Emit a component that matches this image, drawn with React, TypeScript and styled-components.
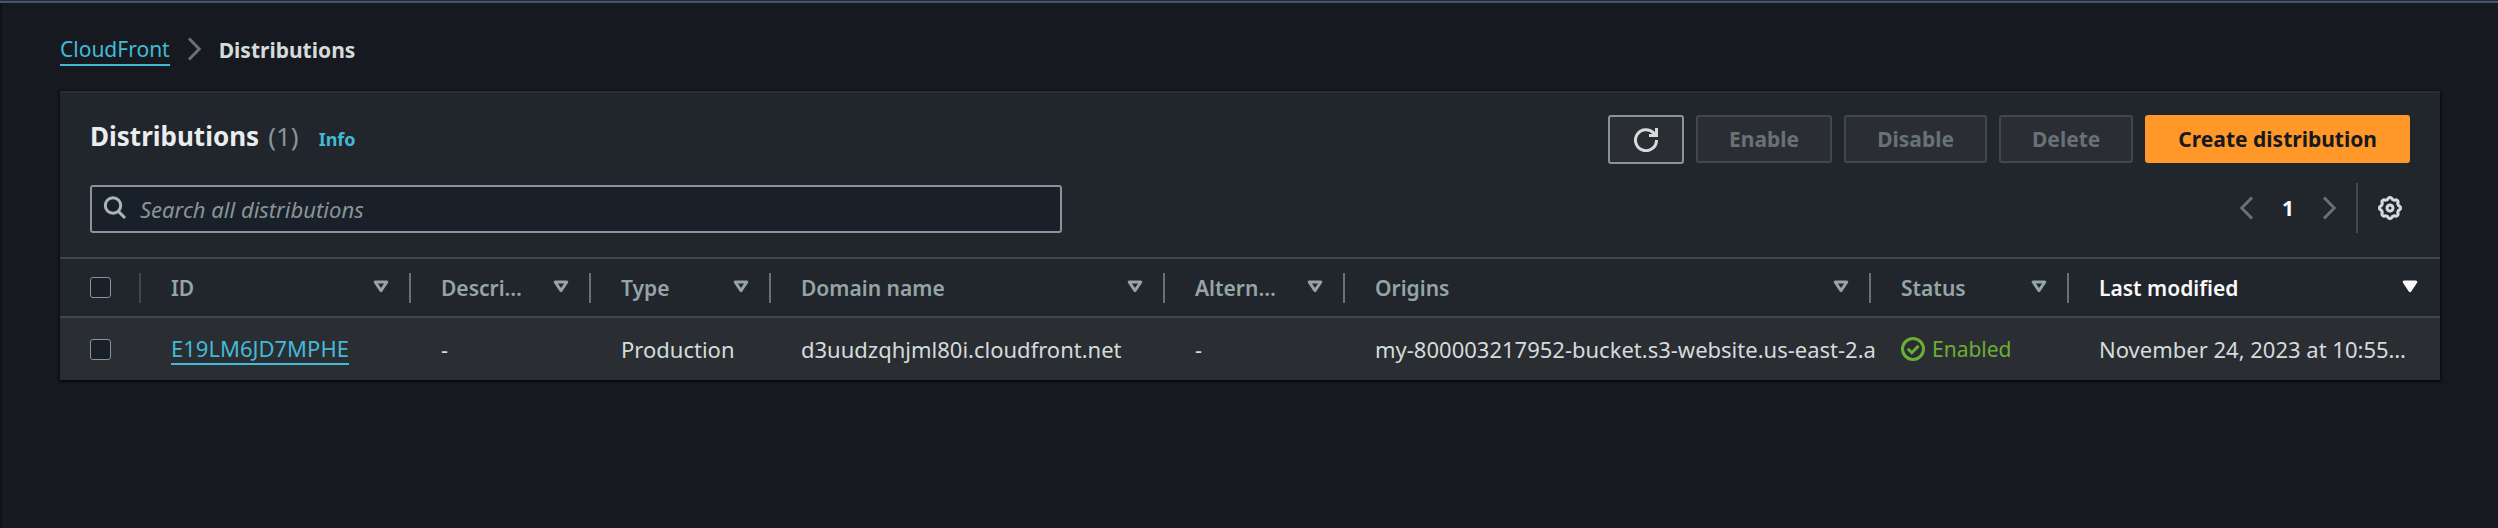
import React from "react";
import styled, { createGlobalStyle } from "styled-components";

const c = {
  page: "#16191f",
  edge: "#101216",
  panel: "#21252c",
  raised: "#2a2e33",
  line: "#414750",
  divider: "#687078",
  input: "#1a2029",
  muted: "#879596",
  label: "#95a5a6",
  text: "#d5dbdb",
  bright: "#eaeded",
  link: "#44b9d6",
  success: "#6aaf35",
  accent: "#ff9828",
};

const GlobalStyle = createGlobalStyle`
  *, *::before, *::after { box-sizing: border-box; }
  html { background: ${c.page}; }
  body {
    margin: 0;
    color: ${c.text};
    font-family: "Noto Sans", "Open Sans", sans-serif;
    font-size: 21px;
    line-height: 30px;
  }
  svg { display: block; flex: none; }
`;

const Page = styled.div`
  min-height: 100vh;
  padding: 0 58px 36px;
  background: ${c.page};
  border-left: 2px solid ${c.edge};
`;

const TopEdge = styled.div`
  height: 3px;
  margin: 0 -58px 0 -60px;
  background: #4a5363;
  border-top: 1px solid #232f3e;
`;

const Breadcrumbs = styled.nav`
  margin-top: 32px;
  ol {
    display: flex;
    align-items: flex-start;
    gap: 17px;
    margin: 0;
    padding: 0;
    list-style: none;
  }
  li {
    display: flex;
    gap: 17px;
  }
  svg { margin-top: 2px; color: ${c.divider}; }
`;

const TextLink = styled.a`
  display: inline-block;
  color: ${c.link};
  text-decoration: none;
  border-bottom: 2px solid ${c.link};
`;

const CrumbLink = styled(TextLink)`
  line-height: 29px;
`;

const CurrentCrumb = styled.span`
  font-weight: 700;
`;

const Panel = styled.section`
  margin-top: 25px;
  background: ${c.panel};
  border-top: 2px solid ${c.raised};
  box-shadow: 0 1px 2px 1px #090b0e;
`;

const PanelHeader = styled.div`
  display: flex;
  justify-content: space-between;
  align-items: flex-start;
  padding: 22px 30px 0;
`;

const Heading = styled.div`
  display: flex;
  align-items: baseline;
  gap: 20px;
  padding-top: 2px;
`;

const Title = styled.h1`
  display: flex;
  gap: 9px;
  margin: 0;
  font-size: 26px;
  line-height: 38px;
  font-weight: 700;
  color: ${c.bright};
  span { font-weight: 400; color: ${c.muted}; }
`;

const InfoLink = styled.a`
  font-size: 18px;
  font-weight: 700;
  color: ${c.link};
  text-decoration: none;
`;

const Actions = styled.div`
  display: flex;
  gap: 12px;
`;

type Variant = "normal" | "disabled" | "primary";
const variants: Record<Variant, { bg: string; border: string; fg: string }> = {
  normal: { bg: c.raised, border: c.muted, fg: c.text },
  disabled: { bg: c.raised, border: c.line, fg: c.divider },
  primary: { bg: c.accent, border: c.accent, fg: c.page },
};

const Button = styled.button<{ $variant: Variant }>`
  display: flex;
  align-items: center;
  justify-content: center;
  height: 48px;
  padding: 0 31px;
  border: 2px solid ${(p) => variants[p.$variant].border};
  border-radius: 3px;
  background: ${(p) => variants[p.$variant].bg};
  color: ${(p) => variants[p.$variant].fg};
  font: inherit;
  font-weight: 700;
`;

const RefreshButton = styled(Button)`
  width: 76px;
  height: 49px;
  padding: 0;
`;

const Tools = styled.div`
  display: flex;
  justify-content: space-between;
  align-items: flex-start;
  padding: 21px 30px 24px;
`;

const SearchBox = styled.label`
  display: flex;
  align-items: center;
  gap: 13px;
  width: 42%;
  max-width: 972px;
  height: 48px;
  padding: 0 11px;
  background: ${c.input};
  border: 2px solid ${c.muted};
  border-radius: 3px;
  svg { color: #aab7b8; margin-bottom: 2px; }
  input {
    flex: 1;
    min-width: 0;
    padding: 0;
    border: 0;
    outline: 0;
    background: transparent;
    color: ${c.text};
    font: inherit;
    font-size: 22px;
  }
  input::placeholder { color: ${c.muted}; opacity: 1; font-style: italic; }
`;

const Pager = styled.div`
  display: flex;
  align-items: center;
  height: 50px;
  margin-top: -2px;
`;

const PageNumber = styled.button`
  width: 68px;
  padding: 0;
  border: 0;
  background: none;
  font: inherit;
  font-weight: 700;
  color: #fafafa;
`;

const IconButton = styled.button`
  padding: 0;
  border: 0;
  background: none;
  color: ${c.divider};
`;

const Preferences = styled.div`
  display: flex;
  align-items: center;
  height: 50px;
  margin-left: 19px;
  padding: 0 8px 0 20px;
  border-left: 2px solid ${c.line};
  button { color: ${c.text}; }
`;

const Table = styled.table`
  width: 100%;
  table-layout: fixed;
  border-collapse: separate;
  border-spacing: 0;
`;

const HeaderCell = styled.th<{ $sorted?: boolean }>`
  height: 61px;
  padding: 0;
  border-top: 2px solid ${c.line};
  border-bottom: 2px solid ${c.line};
  text-align: left;
  font-weight: 600;
  white-space: nowrap;
  color: ${(p) => (p.$sorted ? "#fafafa" : c.label)};
`;

const HeaderContent = styled.div<{ $faint?: boolean; $last?: boolean }>`
  display: flex;
  align-items: center;
  justify-content: space-between;
  height: 30px;
  padding: 0 ${(p) => (p.$last ? 22 : 20)}px 0 30px;
  border-right: ${(p) => (p.$last ? "0" : `2px solid ${p.$faint ? c.line : c.divider}`)};
  svg { margin-bottom: 2px; }
`;

const Cell = styled.td`
  height: 62px;
  padding: 0 0 0 30px;
  background: ${c.raised};
  font-size: 22px;
  white-space: nowrap;
`;

const Status = styled.span`
  display: flex;
  align-items: center;
  gap: 7px;
  font-size: 21px;
  color: ${c.success};
`;

const Checkbox = styled.input`
  display: block;
  appearance: none;
  width: 21px;
  height: 21px;
  margin: 0;
  border: 1px solid ${c.muted};
  border-radius: 3px;
  background: ${c.input};
`;

const Chevron = ({ left }: { left?: boolean }) => (
  <svg width="15" height="24" viewBox="0 0 15 24" fill="none" stroke="currentColor" strokeWidth="3" aria-hidden="true">
    <path d={left ? "M13 1.5 2.8 12 13 22.5" : "M2 1.5 12.2 12 2 22.5"} />
  </svg>
);

const SortIcon = ({ filled }: { filled?: boolean }) => (
  <svg width="16" height="13" viewBox="0 0 16 13" fill={filled ? "currentColor" : "none"} stroke="currentColor" strokeWidth="3" strokeLinejoin="round" aria-hidden="true">
    <path d="M2.2 2h11.6L8 10.6z" />
  </svg>
);

const SearchIcon = () => (
  <svg width="24" height="24" viewBox="0 0 24 24" fill="none" stroke="currentColor" strokeWidth="3" aria-hidden="true">
    <circle cx="10" cy="9.5" r="7.7" />
    <path d="m15.4 15.4 6.6 6.6" />
  </svg>
);

const RefreshIcon = () => (
  <svg width="24" height="24" viewBox="0 0 24 24" fill="none" stroke="currentColor" strokeWidth="3" aria-hidden="true">
    <path d="M22.5 12A10.5 10.5 0 1 1 19.6 4.9L21.5 7" />
    <path d="M22.5 0v7.5H15" />
  </svg>
);

const CheckIcon = () => (
  <svg width="24" height="24" viewBox="0 0 24 24" fill="none" stroke="currentColor" strokeWidth="3" aria-hidden="true">
    <circle cx="12" cy="12" r="10.5" />
    <path d="m6.8 11.8 4 3.9 6.8-6.8" />
  </svg>
);

const gearOutline = Array.from({ length: 96 }, (_, i) => {
  const angle = (i / 96) * Math.PI * 2;
  const radius = 9.6 + 0.9 * Math.tanh(2 * Math.cos(angle * 8));
  return `${(12 + radius * Math.sin(angle)).toFixed(2)} ${(12 - radius * Math.cos(angle)).toFixed(2)}`;
}).join("L");

const GearIcon = () => (
  <svg width="24" height="24" viewBox="0 0 24 24" fill="none" stroke="currentColor" strokeWidth="3" strokeLinejoin="round" aria-hidden="true">
    <path d={`M${gearOutline}Z`} />
    <circle cx="12" cy="12" r="3" />
  </svg>
);

const columns: { name: string; width: number; sorted?: boolean }[] = [
  { name: "ID", width: 270 },
  { name: "Descri…", width: 180 },
  { name: "Type", width: 180 },
  { name: "Domain name", width: 394 },
  { name: "Altern…", width: 180 },
  { name: "Origins", width: 526 },
  { name: "Status", width: 198 },
  { name: "Last modified", width: 371, sorted: true },
];
const SELECT_WIDTH = 81;
const total = columns.reduce((sum, col) => sum + col.width, SELECT_WIDTH);
const share = (width: number) => ({ width: `${(width / total) * 100}%` });

export default function App() {
  return (
    <>
      <GlobalStyle />
      <Page>
        <TopEdge />
        <Breadcrumbs aria-label="Breadcrumbs">
          <ol>
            <li>
              <CrumbLink href="#cloudfront">CloudFront</CrumbLink>
              <Chevron />
            </li>
            <li>
              <CurrentCrumb aria-current="page">Distributions</CurrentCrumb>
            </li>
          </ol>
        </Breadcrumbs>
        <Panel>
          <PanelHeader>
            <Heading>
              <Title>
                Distributions <span>(1)</span>
              </Title>
              <InfoLink href="#info">Info</InfoLink>
            </Heading>
            <Actions>
              <RefreshButton $variant="normal" type="button" aria-label="Refresh">
                <RefreshIcon />
              </RefreshButton>
              <Button $variant="disabled" type="button" disabled>Enable</Button>
              <Button $variant="disabled" type="button" disabled>Disable</Button>
              <Button $variant="disabled" type="button" disabled>Delete</Button>
              <Button $variant="primary" type="button">Create distribution</Button>
            </Actions>
          </PanelHeader>
          <Tools>
            <SearchBox>
              <SearchIcon />
              <input type="text" placeholder="Search all distributions" aria-label="Search all distributions" />
            </SearchBox>
            <Pager>
              <IconButton type="button" disabled aria-label="Previous page"><Chevron left /></IconButton>
              <PageNumber type="button">1</PageNumber>
              <IconButton type="button" disabled aria-label="Next page"><Chevron /></IconButton>
              <Preferences>
                <IconButton type="button" aria-label="Preferences"><GearIcon /></IconButton>
              </Preferences>
            </Pager>
          </Tools>
          <Table>
            <colgroup>
              <col style={share(SELECT_WIDTH)} />
              {columns.map((col) => <col key={col.name} style={share(col.width)} />)}
            </colgroup>
            <thead>
              <tr>
                <HeaderCell scope="col">
                  <HeaderContent $faint>
                    <Checkbox type="checkbox" aria-label="Select all distributions" />
                  </HeaderContent>
                </HeaderCell>
                {columns.map((col) => (
                  <HeaderCell key={col.name} scope="col" $sorted={col.sorted}>
                    <HeaderContent $last={col.sorted}>
                      {col.name}
                      <SortIcon filled={col.sorted} />
                    </HeaderContent>
                  </HeaderCell>
                ))}
              </tr>
            </thead>
            <tbody>
              <tr>
                <Cell><Checkbox type="checkbox" aria-label="Select E19LM6JD7MPHE" /></Cell>
                <Cell><TextLink href="#E19LM6JD7MPHE">E19LM6JD7MPHE</TextLink></Cell>
                <Cell>-</Cell>
                <Cell>Production</Cell>
                <Cell>d3uudzqhjml80i.cloudfront.net</Cell>
                <Cell>-</Cell>
                <Cell>my-800003217952-bucket.s3-website.us-east-2.a</Cell>
                <Cell><Status><CheckIcon />Enabled</Status></Cell>
                <Cell>November 24, 2023 at 10:55…</Cell>
              </tr>
            </tbody>
          </Table>
        </Panel>
      </Page>
    </>
  );
}
